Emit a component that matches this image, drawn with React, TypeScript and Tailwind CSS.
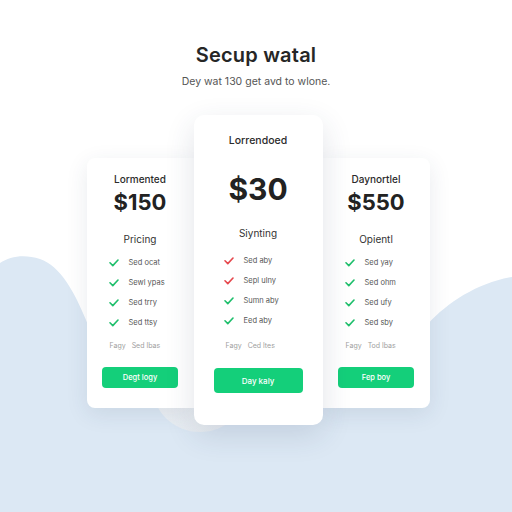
import React from "react";

type Feature = { label: string; ok: boolean };

type Plan = {
  name: string;
  price: string;
  group: string;
  features: Feature[];
  note: [string, string];
  cta: string;
};

const plans: Plan[] = [
  {
    name: "Lormented",
    price: "$150",
    group: "Pricing",
    features: [
      { label: "Sed ocat", ok: true },
      { label: "Sewl ypas", ok: true },
      { label: "Sed trry", ok: true },
      { label: "Sed ttsy", ok: true },
    ],
    note: ["Fagy", "Sed lbas"],
    cta: "Degt logy",
  },
  {
    name: "Lorrendoed",
    price: "$30",
    group: "Siynting",
    features: [
      { label: "Sed aby", ok: false },
      { label: "Sepl ulny", ok: false },
      { label: "Sumn aby", ok: true },
      { label: "Eed aby", ok: true },
    ],
    note: ["Fagy", "Ced ltes"],
    cta: "Day kaly",
  },
  {
    name: "Daynortlel",
    price: "$550",
    group: "Opientl",
    features: [
      { label: "Sed yay", ok: true },
      { label: "Sed ohm", ok: true },
      { label: "Sed ufy", ok: true },
      { label: "Sed sby", ok: true },
    ],
    note: ["Fagy", "Tod lbas"],
    cta: "Fep boy",
  },
];

function Check({ ok }: { ok: boolean }) {
  return (
    <svg width="10" height="8" viewBox="0 0 10 8" fill="none" className="shrink-0">
      <path
        d="M1 3.8 L3.8 6.6 L9 1"
        stroke={ok ? "#1fbf6c" : "#e5484d"}
        strokeWidth="1.6"
        strokeLinecap="round"
        strokeLinejoin="round"
      />
    </svg>
  );
}

function SideCard({ plan, rounded }: { plan: Plan; rounded: string }) {
  return (
    <div
      className={`w-[107px] h-[250px] mt-[43px] bg-white ${rounded} shadow-[0_6px_22px_rgba(40,60,90,0.10)] flex flex-col items-center pt-[14px]`}
    >
      <div className="h-[14px] leading-[14px] text-[10px] font-medium text-[#2b2b2b]">{plan.name}</div>
      <div className="mt-[2px] h-[28px] leading-[28px] text-[22px] font-bold text-[#222]">{plan.price}</div>
      <div className="mt-[16px] h-[14px] leading-[14px] text-[10px] text-[#333]">{plan.group}</div>
      <div className="mt-[7px] w-full pl-[22px] flex flex-col">
        {plan.features.map((f) => (
          <div key={f.label} className="h-5 flex items-center gap-[10px]">
            <Check ok={f.ok} />
            <span className="text-[7.5px] text-[#555]">{f.label}</span>
          </div>
        ))}
      </div>
      <div className="mt-[7px] w-full pl-[23px] h-[12px] flex items-center gap-[6px] text-[7px] text-[#a0a0a0]">
        <span>{plan.note[0]}</span>
        <span>{plan.note[1]}</span>
      </div>
      <button className="mt-[15px] w-[76px] h-[21px] rounded-[4px] bg-[#14cf7a] text-white text-[7.5px] font-medium">
        {plan.cta}
      </button>
    </div>
  );
}

function FeaturedCard({ plan }: { plan: Plan }) {
  return (
    <div className="relative z-10 w-[129px] h-[310px] bg-white rounded-[10px] shadow-[0_10px_30px_rgba(40,60,90,0.14)] flex flex-col items-center pt-[19px]">
      <div className="h-[14px] leading-[14px] text-[10.5px] font-medium text-[#2b2b2b]">{plan.name}</div>
      <div className="mt-[23px] h-[36px] leading-[36px] text-[30px] font-bold text-[#222]">{plan.price}</div>
      <div className="mt-[19px] h-[14px] leading-[14px] text-[10px] text-[#333]">{plan.group}</div>
      <div className="mt-[11px] w-full pl-[30px] flex flex-col">
        {plan.features.map((f) => (
          <div key={f.label} className="h-5 flex items-center gap-[10px]">
            <Check ok={f.ok} />
            <span className="text-[7.5px] text-[#555]">{f.label}</span>
          </div>
        ))}
      </div>
      <div className="mt-[9px] w-full pl-[32px] h-[12px] flex items-center gap-[6px] text-[7px] text-[#a0a0a0]">
        <span>{plan.note[0]}</span>
        <span>{plan.note[1]}</span>
      </div>
      <button className="mt-[16px] w-[89px] h-[25px] rounded-[4px] bg-[#14cf7a] text-white text-[8px] font-medium">
        {plan.cta}
      </button>
    </div>
  );
}

function Backdrop() {
  return (
    <svg className="absolute inset-0" width="512" height="512" viewBox="0 0 512 512">
      <defs>
        <linearGradient id="hill" x1="0" y1="0" x2="0" y2="1">
          <stop offset="0" stopColor="#fbfcfd" />
          <stop offset="1" stopColor="#e8edf2" />
        </linearGradient>
      </defs>
      <path
        d="M0 263 C10 256 25 254 40 259 C60 266 75 290 92 335 L92 400 L428 400 L428 324 C448 302 478 283 512 277 L512 512 L0 512 Z"
        fill="#dce8f4"
      />
      <ellipse cx="200" cy="385" rx="48" ry="47" fill="url(#hill)" />
    </svg>
  );
}

export default function App() {
  return (
    <div
      className="relative w-[512px] h-[512px] overflow-hidden bg-white"
      style={{ fontFamily: "Inter, 'Open Sans', sans-serif" }}
    >
      <Backdrop />
      <div className="relative flex flex-col items-center pt-[42px]">
        <h1 className="h-[26px] leading-[26px] text-[20px] font-semibold text-[#262626] tracking-[0.2px]">
          Secup watal
        </h1>
        <p className="mt-[7px] h-[14px] leading-[14px] text-[10.5px] text-[#555]">
          Dey wat 130 get avd to wlone.
        </p>
        <div className="mt-[26px] flex items-start pl-[4px]">
          <SideCard plan={plans[0]} rounded="rounded-l-[8px]" />
          <FeaturedCard plan={plans[1]} />
          <SideCard plan={plans[2]} rounded="rounded-r-[8px]" />
        </div>
      </div>
    </div>
  );
}
